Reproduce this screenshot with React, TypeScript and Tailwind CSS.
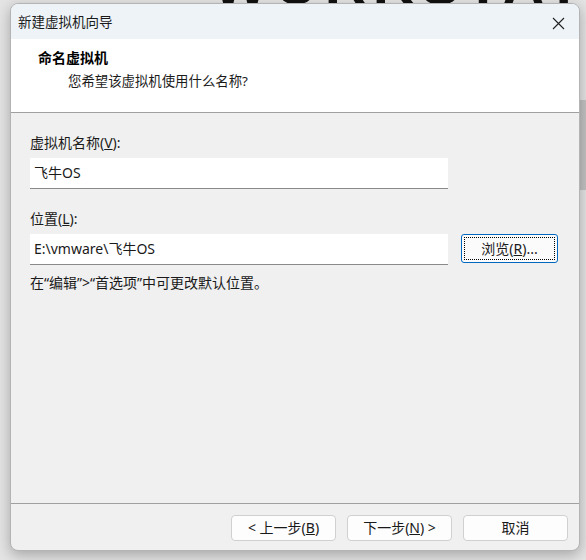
const font = "font-['Noto_Sans','Noto_Sans_CJK_SC',sans-serif]";

const WizardButton = ({ children }: { children: React.ReactNode }) => (
	<button className="flex h-[26px] w-[105px] items-center justify-center rounded-[4px] border border-[#d0d0d0] bg-[#fdfdfd] text-[14px] leading-[20px] text-[#1a1a1a]">
		{children}
	</button>
);

const App = () => {
	return (
		<div className={`relative h-[560px] w-[586px] overflow-hidden bg-[#e4e4e4] ${font}`}>
			{/* desktop behind the dialog */}
			<div className="absolute left-[213px] top-[-45px] whitespace-nowrap font-['Liberation_Sans',sans-serif] text-[58px] font-bold leading-none tracking-[6px] text-[#111]">
				WORKSTATION PRO
			</div>
			<div className="absolute right-0 top-[100px] h-[90px] w-[8px] bg-[#c2c2c2]"></div>

			{/* dialog window */}
			<div className="absolute left-[10px] top-[3px] flex h-[548px] w-[570px] flex-col overflow-hidden rounded-[8px] border border-[#b4b4b4] bg-[#f0f0f0] shadow-[0_4px_14px_rgba(0,0,0,0.28)]">
				<div className="flex h-[35px] shrink-0 items-center justify-between bg-[#edf3f7] pl-[7px] pr-[14px]">
					<span className="text-[13.5px] leading-[20px] text-[#1a1a1a]">新建虚拟机向导</span>
					<svg width="13" height="13" viewBox="0 0 13 13" className="mt-[3px]">
						<path d="M1 1L12 12M12 1L1 12" stroke="#222" strokeWidth="1.1" />
					</svg>
				</div>

				<div className="h-[74px] shrink-0 border-b border-[#a0a0a0] bg-white pl-[27px] pt-[9px]">
					<div className="text-[14px] font-bold leading-[20px] text-black">命名虚拟机</div>
					<div className="mt-[3px] pl-[30px] text-[13.4px] leading-[20px] text-[#1a1a1a]">您希望该虚拟机使用什么名称?</div>
				</div>

				<div className="flex-1 pl-[19px] pt-[20px] text-[14px] leading-[20px] text-[#1a1a1a]">
					<div>
						虚拟机名称(<span className="underline">V</span>):
					</div>
					<div className="mt-[5px] flex h-[31px] w-[418px] items-center border-b border-[#8a8a8a] bg-white pl-[4px]">飞牛OS</div>

					<div className="mt-[20px]">
						位置(<span className="underline">L</span>):
					</div>
					<div className="mt-[5px] flex items-start gap-[13px]">
						<div className="flex h-[31px] w-[418px] items-center border-b border-[#8a8a8a] bg-white pl-[4px]">E:\vmware\飞牛OS</div>
						<button className="flex h-[29px] w-[97px] items-center justify-center rounded-[3px] border border-[#0067c0] bg-[#fbfbfb] p-[2px]">
							<span className="flex h-full w-full items-center justify-center border border-dotted border-black">
								浏览(<span className="underline">R</span>)...
							</span>
						</button>
					</div>
					<div className="mt-[8px]">在“编辑”&gt;“首选项”中可更改默认位置。</div>
				</div>

				<div className="flex h-[47px] shrink-0 items-start justify-end gap-[11px] border-t border-[#a0a0a0] pr-[11px] pt-[11px]">
					<WizardButton>
						&lt; 上一步(<span className="underline">B</span>)
					</WizardButton>
					<WizardButton>
						下一步(<span className="underline">N</span>) &gt;
					</WizardButton>
					<WizardButton>取消</WizardButton>
				</div>
			</div>
		</div>
	);
};

export default App;
